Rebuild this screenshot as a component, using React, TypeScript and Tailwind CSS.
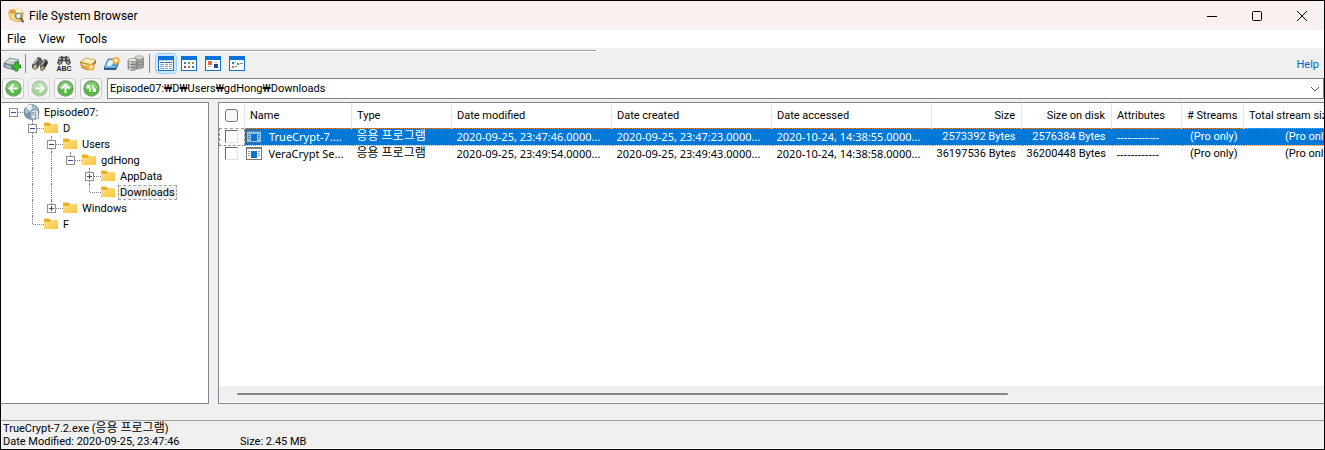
import type { ReactNode } from "react";

type FileRow = {
  name: string;
  type: string;
  modified: string;
  created: string;
  accessed: string;
  size: string;
  sizeOnDisk: string;
  attributes: string;
  streams: string;
  streamSize: string;
};

type TreeItem = {
  label: string;
  // one entry per parent level, true where its line runs through this row
  guides: boolean[];
  toggle?: "+" | "-";
  last?: boolean;
  root?: boolean;
  selected?: boolean;
};

const tree: TreeItem[] = [
  { label: "Episode07:", guides: [], toggle: "-", root: true },
  { label: "D", guides: [false], toggle: "-" },
  { label: "Users", guides: [false, true], toggle: "-" },
  { label: "gdHong", guides: [false, true, true], toggle: "-", last: true },
  { label: "AppData", guides: [false, true, true, false], toggle: "+" },
  { label: "Downloads", guides: [false, true, true, false], last: true, selected: true },
  { label: "Windows", guides: [false, true], toggle: "+", last: true },
  { label: "F", guides: [false], last: true },
];

const files: FileRow[] = [
  {
    name: "TrueCrypt-7....",
    type: "응용 프로그램",
    modified: "2020-09-25, 23:47:46.0000...",
    created: "2020-09-25, 23:47:23.0000...",
    accessed: "2020-10-24, 14:38:55.0000...",
    size: "2573392 Bytes",
    sizeOnDisk: "2576384 Bytes",
    attributes: "------------",
    streams: "(Pro only)",
    streamSize: "(Pro only)",
  },
  {
    name: "VeraCrypt Se...",
    type: "응용 프로그램",
    modified: "2020-09-25, 23:49:54.0000...",
    created: "2020-09-25, 23:49:43.0000...",
    accessed: "2020-10-24, 14:38:58.0000...",
    size: "36197536 Bytes",
    sizeOnDisk: "36200448 Bytes",
    attributes: "------------",
    streams: "(Pro only)",
    streamSize: "(Pro only)",
  },
];

const wide = "font-['Noto_Sans',sans-serif]";

const columns: { key: keyof FileRow; label: string; right?: boolean; cell?: string }[] = [
  { key: "name", label: "Name", cell: wide },
  { key: "type", label: "Type", cell: "text-xs" },
  { key: "modified", label: "Date modified", cell: wide },
  { key: "created", label: "Date created", cell: wide },
  { key: "accessed", label: "Date accessed", cell: wide },
  { key: "size", label: "Size", right: true },
  { key: "sizeOnDisk", label: "Size on disk", right: true },
  { key: "attributes", label: "Attributes", cell: wide },
  { key: "streams", label: "# Streams", right: true },
  { key: "streamSize", label: "Total stream size", right: true },
];

const AppIcon = () => (
  <svg width="17" height="17" viewBox="0 0 17 17">
    <path d="M1 3l5-1 2 2h7v9l-4 2-8-3z" fill="#dba53c" />
    <path d="M8 1.500l6 1v4H8z" fill="#fff7dc" stroke="#d9c083" strokeWidth=".5" />
    <path d="M.5 5l6 1.500h9L14 14l-5 1-7-3z" fill="#f6d682" stroke="#c9973b" strokeWidth=".6" />
    <circle cx="10.500" cy="9" r="3" fill="#dfeef5" stroke="#797873" strokeWidth="1.200" />
    <path d="M12.800 11.300l2.700 4" stroke="#5b5750" strokeWidth="2" />
  </svg>
);

const DriveAddIcon = () => (
  <svg width="18" height="16" viewBox="0 0 18 16">
    <path d="M1 7l6-5 9 2-4 6z" fill="#c3cad0" stroke="#7b8791" strokeWidth=".8" />
    <path d="M1 7l10 3v4L1 11z" fill="#8a98a3" stroke="#687681" strokeWidth=".8" />
    <path d="M11 10l5-6v4l-5 6z" fill="#6d7c88" />
    <path d="M4 7l4-3 5 1" stroke="#f2f5f7" fill="none" />
    <path d="M3 10l5 1.500" stroke="#dde5ea" />
    <path d="M12 6h3v3h3v3h-3v3h-3v-3H9V9h3z" fill="#3cbf30" stroke="#187914" strokeWidth=".8" />
  </svg>
);

const BinocularsIcon = () => (
  <svg width="18" height="16" viewBox="0 0 18 16">
    <path d="M1 9l6-8 3 1 1 2-4 8-3 2-3-2z" fill="#4e4b48" />
    <path d="M9 11l4-8 3 1 1 3-4 7-3 1z" fill="#383634" />
    <path d="M8 4l5 1-2 5-4-1z" fill="#68625d" />
    <path d="M3 8l4-5M11 9l3-5" stroke="#c4bdb5" strokeWidth="1.400" />
    <ellipse cx="4" cy="11" rx="1.900" ry="2.600" transform="rotate(25 4 11)" fill="#bca98b" />
    <ellipse cx="11.500" cy="12" rx="1.900" ry="2.300" transform="rotate(25 11.500 12)" fill="#a9947a" />
  </svg>
);

const FindTextIcon = () => (
  <svg width="18" height="17" viewBox="0 0 18 17">
    <path d="M2 8l2-6 3-1 2 1 2-1 3 1 2 6-2 2-3-1-1-3H8L7 9l-3 1z" fill="#494a4c" />
    <path d="M4 4l2-1M12 3l2 1M8 4h2" stroke="#c1c5c9" strokeWidth="1.500" />
    <circle cx="5" cy="7.500" r="1.500" fill="#8e9599" />
    <circle cx="13" cy="7.500" r="1.500" fill="#8e9599" />
    <text x="1.500" y="16" fontSize="7" fontWeight="700" fontFamily="Liberation Sans" fill="#222">ABC</text>
  </svg>
);

const DriveGoldIcon = () => (
  <svg width="18" height="16" viewBox="0 0 18 16">
    <path d="M1 6l6-4 10 2-4 5z" fill="#faeebb" stroke="#b89848" strokeWidth=".7" />
    <path d="M1 6l11 3v3l-3 2-6-2z" fill="#d9ad45" stroke="#a87f2e" strokeWidth=".7" />
    <path d="M12 9l5-5v3l-5 6z" fill="#8f7b53" />
    <path d="M3 8l6 2" stroke="#fff3c7" />
    <circle cx="12" cy="11" r="3.500" fill="#f39d1c" />
    <path d="M12 7v8M8 11h8M9.500 8.500l5 5M14.500 8.500l-5 5" stroke="#ffd985" strokeWidth=".7" />
    <circle cx="12" cy="11" r="1.500" fill="#fff6d0" />
  </svg>
);

const SnapshotIcon = () => (
  <svg width="18" height="16" viewBox="0 0 18 16">
    <path d="M5 3h11l-3 9H1z" fill="#8cc5ea" stroke="#31679c" strokeWidth=".8" />
    <path d="M1 12h12l3-8v3l-3 7H1z" fill="#315f8d" />
    <path d="M6 4.500h5L8 10H3.500z" fill="#e5f5fc" />
    <path d="M8 10l4-3 1 3z" fill="#4f94cb" />
    <circle cx="13" cy="4.500" r="3.500" fill="#f6a01d" />
    <path d="M13 .5v8M9 4.500h8M10.500 2l5 5M15.500 2l-5 5" stroke="#ffdb8c" strokeWidth=".7" />
    <circle cx="13" cy="4.500" r="1.500" fill="#fff6d0" />
  </svg>
);

const DatabaseIcon = () => (
  <svg width="18" height="17" viewBox="0 0 18 17">
    <path d="M8 2.500v10c2 1.500 6 1.500 8.500 0v-10z" fill="#a5a5a1" stroke="#686866" strokeWidth=".6" />
    <ellipse cx="12.200" cy="2.500" rx="4.200" ry="1.700" fill="#deded9" stroke="#777" strokeWidth=".6" />
    <path d="M8 6c2 1.500 6 1.500 8.500 0M8 9c2 1.500 6 1.500 8.500 0" fill="none" stroke="#77776f" strokeWidth=".8" />
    <path d="M1 5v9c2 1.800 7 1.800 9 0V5z" fill="#b1b1ad" stroke="#5c5c59" strokeWidth=".6" />
    <path d="M2 6v8.500l2 .7V6.500z" fill="#dededb" />
    <ellipse cx="5.500" cy="5" rx="4.500" ry="1.700" fill="#e8e8e5" stroke="#777" strokeWidth=".6" />
    <path d="M1 8.500c2 1.500 7 1.500 9 0M1 11.500c2 1.500 7 1.500 9 0" fill="none" stroke="#6b6b68" strokeWidth=".8" />
  </svg>
);

const ViewFrame = ({ children }: { children: ReactNode }) => (
  <svg width="16" height="15" viewBox="0 0 16 15" shapeRendering="crispEdges">
    <rect x=".5" y=".5" width="15" height="14" fill="#fff" stroke="#1770cd" />
    <rect width="16" height="4" fill="#0873da" />
    {children}
  </svg>
);

const DetailsView = () => (
  <ViewFrame>
    <path d="M1 4.500h14" stroke="#aed6f5" />
    <path d="M2 6.500h4M7 6.500h7" stroke="#35699d" />
    <path d="M2 8.500h4M7 8.500h3M11 8.500h3M2 10.500h4M7 10.500h3M11 10.500h3M2 12.500h4M7 12.500h3M11 12.500h3" stroke="#7fa3c4" />
  </ViewFrame>
);

const IconsView = () => (
  <ViewFrame>
    <path d="M3 6h2v2H3zM11 10h2v2h-2z" fill="#3178b8" />
    <path d="M7 6h2v2H7z" fill="#51a658" />
    <path d="M11 6h2v2h-2z" fill="#a08a2c" />
    <path d="M3 10h2v2H3z" fill="#555d9b" />
    <path d="M7 10h2v2H7z" fill="#e35b31" />
  </ViewFrame>
);

const TilesView = () => (
  <ViewFrame>
    <path d="M3 5h4v4H3z" fill="#ed6736" />
    <path d="M9 8h4v4H9z" fill="#16489c" />
    <path d="M3 10h3v1H3zM9 6h3v1H9z" fill="#b9c6d6" />
  </ViewFrame>
);

const ListView = () => (
  <ViewFrame>
    <path d="M3 6h2v2H3z" fill="#3178b8" />
    <path d="M8 7h2v2H8z" fill="#41a448" />
    <path d="M3 10h2v2H3z" fill="#ed6736" />
    <path d="M6 6h1v1H6zM11 7h3v1h-3zM6 10h2v1H6z" fill="#78879a" />
  </ViewFrame>
);

const arrows = {
  back: "M12.500 8.500H5M8.500 4.500l-4 4 4 4",
  forward: "M4.500 8.500H12M8.500 4.500l4 4-4 4",
  up: "M8.500 13V5M4.500 8.500l4-4 4 4",
  refresh: "M7.500 5.700H4.700V8.500M5 6l2 2.500v3.500M9.500 11.300h2.800V8.500M12 11l-2-2.500V5",
};

const NavButton = ({ kind, label, disabled }: { kind: keyof typeof arrows; label: string; disabled?: boolean }) => (
  <button
    aria-label={label}
    disabled={disabled}
    className="flex h-[21px] w-[22px] items-center justify-center rounded border border-[#c9c9c9] bg-[#fafafa] disabled:opacity-50"
  >
    <svg width="17" height="17" viewBox="0 0 17 17">
      <circle cx="8.500" cy="8.500" r="7.600" fill="#52bd3a" stroke="#7d9a7c" strokeWidth="1.400" />
      <path d="M1.800 8a6.800 6.800 0 0 1 13.400 0c-4 2-9.400 2-13.400 0z" fill="#86cd74" />
      <path d={arrows[kind]} fill="none" stroke="#fff" strokeWidth={kind === "refresh" ? 1.4 : 2} />
    </svg>
  </button>
);

const FolderIcon = () => (
  <svg width="14" height="12" viewBox="0 0 14 12" className="ml-0.5 shrink-0">
    <path d="M0 1.500Q0 .5 1 .5h4l2 2h6q1 0 1 1V11H0z" fill="#eeb01f" />
    <path d="M0 4h6l1.500-1.500H14V10q0 1-1 1H1q-1 0-1-1z" fill="url(#folder)" />
    <defs>
      <linearGradient id="folder" x2="1" y2="1">
        <stop stopColor="#ffe28a" />
        <stop offset="1" stopColor="#fbc53a" />
      </linearGradient>
    </defs>
  </svg>
);

const DiskImageIcon = () => (
  <svg width="17" height="16" viewBox="0 0 17 17" className="shrink-0">
    <circle cx="8.500" cy="8.500" r="7.800" fill="#a6c0d0" stroke="#64798a" />
    <path d="M8 8L2 3a8 8 0 0 1 7-2z" fill="#eef6fa" />
    <path d="M8 8l-7 3a8 8 0 0 0 6 5z" fill="#7893a6" />
    <path d="M8 7l4-1 4 1v8l-4 1.500L8 15z" fill="#dbe5ec" stroke="#607586" strokeWidth=".7" />
    <path d="M12.500 8v8M9 9h2M9 11h2" stroke="#607586" strokeWidth=".8" />
  </svg>
);

const ExeIcon = ({ selected }: { selected: boolean }) => (
  <svg width="16" height="13" viewBox="0 0 16 13" shapeRendering="crispEdges" className="shrink-0">
    <rect x=".5" y=".5" width="15" height="12" fill={selected ? "#8fc3ec" : "#fff"} stroke={selected ? "#416d93" : "#777"} />
    <path d="M1 1h14v1H1z" fill={selected ? "#5a8bb5" : "#8b8b8b"} />
    <path d="M5 4h6v7H5z" fill="#0874cd" />
    <path d="M2 4.500h2M2 6.500h2M2 8.500h2M12 4.500h2M12 6.500h2M12 8.500h2" stroke={selected ? "#4c82b0" : "#999"} />
  </svg>
);

const Separator = () => <div className="mr-[5px] ml-1 h-[19px] w-px bg-[#8a8a8a]" />;

const Toggle = ({ sign }: { sign: "+" | "-" }) => (
  <button aria-label={sign === "+" ? "Expand" : "Collapse"} className="relative block size-[9px]">
    <svg width="9" height="9" viewBox="0 0 9 9" shapeRendering="crispEdges">
      <rect x=".5" y=".5" width="8" height="8" fill="#fafafa" stroke="#919191" />
      <path d={sign === "+" ? "M2 4.500h5M4.500 2v5" : "M2 4.500h5"} stroke="#3b4f9a" />
    </svg>
  </button>
);

const TreeRow = ({ item }: { item: TreeItem }) => (
  <li className="flex h-4 items-center">
    {item.guides.map((line, i) => (
      <span key={i} className="flex h-4 w-[19px] shrink-0 justify-center">
        {line && <span className="border-l border-dotted border-[#808080]" />}
      </span>
    ))}
    <span className="relative flex h-4 w-[19px] shrink-0 items-center justify-center">
      {!item.root && (
        <span className={`absolute top-0 left-[9px] border-l border-dotted border-[#808080] ${item.last ? "h-2" : "h-4"}`} />
      )}
      <span className="absolute top-2 left-[10px] w-[11px] border-t border-dotted border-[#808080]" />
      {item.toggle && <Toggle sign={item.toggle} />}
    </span>
    {item.root ? <DiskImageIcon /> : <FolderIcon />}
    <span className={`px-px leading-[13px] ${item.root ? "ml-[3px]" : "ml-1"} ${item.selected ? "bg-[#f0f0f0] outline-1 outline-dashed outline-[#a0a0a0]" : ""}`}>
      {item.label}
    </span>
  </li>
);

const App = () => {
  return (
    <div className="flex min-h-screen flex-col border border-black bg-[#f0f0f0] font-['Roboto','Noto_Sans_CJK_KR',sans-serif] text-[11px] leading-4 text-black">
      <header className="flex h-[29px] items-center bg-[#f9f1ef] pl-[7px]">
        <AppIcon />
        <h1 className="ml-1 flex-1 text-xs">File System Browser</h1>
        <button aria-label="Minimize" className="flex h-full w-[45px] items-center justify-center">
          <svg width="10" height="10" viewBox="0 0 10 10" shapeRendering="crispEdges">
            <path d="M0 5.500h10" stroke="#000" />
          </svg>
        </button>
        <button aria-label="Maximize" className="flex h-full w-[45px] items-center justify-center">
          <svg width="10" height="10" viewBox="0 0 10 10">
            <rect x=".5" y=".5" width="9" height="9" rx="1" fill="none" stroke="#000" />
          </svg>
        </button>
        <button aria-label="Close" className="flex h-full w-[45px] items-center justify-center">
          <svg width="10" height="10" viewBox="0 0 10 10">
            <path d="M0 0l10 10M10 0L0 10" stroke="#000" />
          </svg>
        </button>
      </header>

      <nav className="flex h-[18px] items-center gap-[13px] bg-white pl-1.5 text-xs">
        <button>File</button>
        <button>View</button>
        <button>Tools</button>
      </nav>

      <div className="pt-0.5">
        <div className="h-0.5 w-[45%] border-t border-b border-t-[#a0a0a0] border-b-white" />
        <div className="flex h-[26px] items-center pr-[5px] pb-[3px] pl-0.5">
          <button aria-label="Add evidence"><DriveAddIcon /></button>
          <Separator />
          <div className="flex items-center gap-1.5">
            <button aria-label="Find"><BinocularsIcon /></button>
            <button aria-label="Find text"><FindTextIcon /></button>
            <button aria-label="Scan drive"><DriveGoldIcon /></button>
            <button aria-label="Snapshot"><SnapshotIcon /></button>
            <button aria-label="Drives"><DatabaseIcon /></button>
          </div>
          <Separator />
          <button aria-label="Details" className="flex h-[21px] w-[22px] items-center justify-center rounded-sm border border-[#99d1ff] bg-[#cce8ff]">
            <DetailsView />
          </button>
          <div className="ml-1 flex items-center gap-2">
            <button aria-label="Icons"><IconsView /></button>
            <button aria-label="Tiles"><TilesView /></button>
            <button aria-label="List"><ListView /></button>
          </div>
          <a href="#help" className="ml-auto pt-0.5 text-[#0066cc]">Help</a>
        </div>
      </div>

      <div className="flex h-[21px] gap-[5px]">
        <div className="flex shrink-0 gap-1 pl-px">
          <NavButton kind="back" label="Back" />
          <NavButton kind="forward" label="Forward" disabled />
          <NavButton kind="up" label="Up" />
          <NavButton kind="refresh" label="Refresh" />
        </div>
        <div className="flex flex-1 items-center border border-[#828282] bg-white pr-[3px] pl-0.5">
          <input aria-label="Path" defaultValue="Episode07:₩D₩Users₩gdHong₩Downloads" className="min-w-0 flex-1 outline-none" />
          <svg width="10" height="6" viewBox="0 0 10 6">
            <path d="M1 1l4 4 4-4" fill="none" stroke="#555" />
          </svg>
        </div>
      </div>

      <main className="mt-[3px] flex flex-1 gap-[9px]">
        <ul className="w-[208px] shrink-0 border-y border-r border-[#828790] bg-white pt-px pl-[3px]">
          {tree.map((item) => (
            <TreeRow key={item.label} item={item} />
          ))}
        </ul>

        <section className="flex min-w-0 flex-1 flex-col border-y border-l border-[#828790] bg-white">
          <div className="flex-1 overflow-hidden">
            <table className="w-[1119px] table-fixed border-collapse">
              <colgroup>
                <col className="w-[25px]" />
                <col className="w-[107px]" />
                <col className="w-[100px]" />
                <col className="w-[160px]" />
                <col className="w-[160px]" />
                <col className="w-[160px]" />
                <col className="w-[90px]" />
                <col className="w-[90px]" />
                <col className="w-[70px]" />
                <col className="w-[62px]" />
                <col className="w-[95px]" />
              </colgroup>
              <thead>
                <tr className="h-[25px]">
                  <th className="border-r border-[#e5e5e5] p-0 pl-[5px]">
                    <input type="checkbox" aria-label="Select all" className="block size-[13px] appearance-none rounded-[3px] border border-[#767676] bg-[#f8f8f8]" />
                  </th>
                  {columns.map((col) => (
                    <th key={col.key} className={`border-r border-[#e5e5e5] pt-0.5 pr-1.5 pb-0 pl-[5px] font-normal whitespace-nowrap ${col.right ? "text-right" : "text-left"}`}>
                      {col.label}
                    </th>
                  ))}
                </tr>
              </thead>
              <tbody>
                {files.map((file, i) => (
                  <tr key={file.name} className={`h-[17px] ${i === 0 ? "text-white" : ""}`}>
                    <td className={`p-0 pl-[5px] ${i === 0 ? "border border-dashed border-[#999]" : ""}`}>
                      <input
                        type="checkbox"
                        aria-label={file.name}
                        className="block size-[13px] appearance-none border border-t-[#696969] border-r-[#e3e3e3] border-b-[#e3e3e3] border-l-[#696969] bg-white"
                      />
                    </td>
                    {columns.map((col) => (
                      <td
                        key={col.key}
                        className={`py-0 pr-1.5 pl-[5px] leading-[15px] whitespace-nowrap ${col.right ? "text-right" : "text-left"} ${col.cell ?? ""} ${i === 0 ? "border-y border-dotted border-[#e0934c] bg-[#0078d7]" : ""}`}
                      >
                        {col.key === "name" ? (
                          <span className="-ml-1 flex items-center gap-[7px]">
                            <ExeIcon selected={i === 0} />
                            {file.name}
                          </span>
                        ) : (
                          file[col.key]
                        )}
                      </td>
                    ))}
                  </tr>
                ))}
              </tbody>
            </table>
          </div>
          <div className="mb-px flex h-4 items-center bg-[#f0f0f0] pr-[316px] pl-[18px]">
            <div className="h-0.5 flex-1 rounded-full bg-[#858585]" />
          </div>
        </section>
      </main>

      <footer className="mt-4 grid h-[29px] grid-cols-[237px_1fr] border-t border-b border-t-[#a0a0a0] border-b-white pt-px pl-0.5 leading-[13px]">
        <p className="col-span-2">
          TrueCrypt-7.2.exe (<span className="text-xs leading-[13px]">응용 프로그램</span>)
        </p>
        <p>Date Modified: 2020-09-25, 23:47:46</p>
        <p>Size: 2.45 MB</p>
      </footer>
    </div>
  );
};

export default App;
